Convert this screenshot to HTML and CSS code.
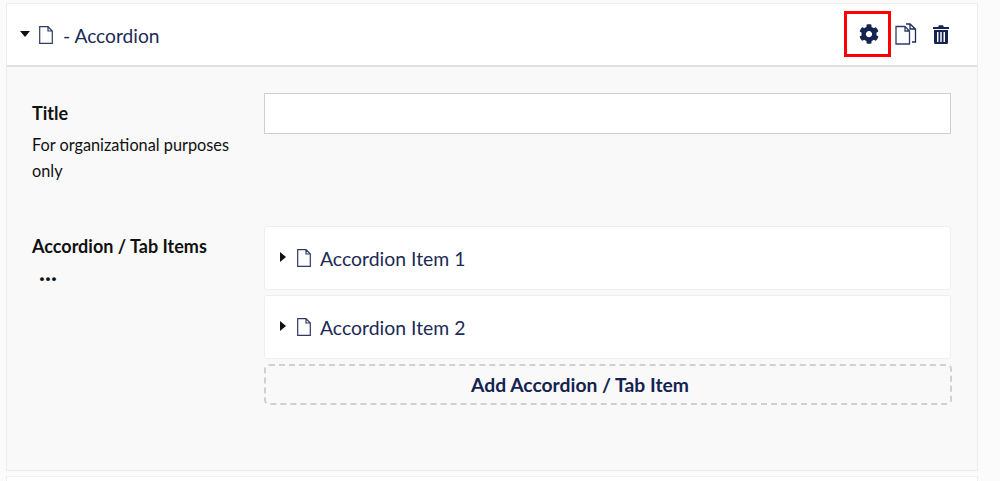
FILE: index.html
```html
<!DOCTYPE html>
<html lang="en">
<head>
    <meta charset="UTF-8">
    <title>Accordion</title>
    <link rel="stylesheet" href="styles.css">
</head>
<body>
    <div class="card">
        <div class="card_head">
            <svg class="caret_down" viewBox="0 0 10 6"><path d="M0 0h10L5 6z"/></svg>
            <svg class="doc doc_big" viewBox="0 0 14 18"><path d="M.7.6h8.300l4.300 4.400v12.400H.7z M9 .6v4.400h4.300"/></svg>
            <span class="card_title">- Accordion</span>
            <div class="tools">
                <span class="tool tool_gear">
                    <svg width="20" height="20" viewBox="0 0 512 512"><path d="M487.400 315.700l-42.600-24.600c4.300-23.200 4.300-47 0-70.200l42.600-24.600c4.900-2.800 7.100-8.600 5.500-14-11.100-35.600-30-67.800-54.700-94.600-3.800-4.100-10-5.100-14.800-2.300L380.800 110c-17.900-15.400-38.500-27.300-60.800-35.100V25.800c0-5.600-3.900-10.500-9.400-11.700-36.700-8.200-74.300-7.800-109.200 0-5.500 1.200-9.400 6.100-9.400 11.700V75c-22.200 7.900-42.800 19.800-60.800 35.100L88.700 85.500c-4.900-2.800-11-1.900-14.800 2.300-24.700 26.700-43.600 58.900-54.700 94.600-1.700 5.400.6 11.200 5.500 14L67.300 221c-4.300 23.200-4.300 47 0 70.200l-42.600 24.600c-4.900 2.800-7.100 8.600-5.500 14 11.100 35.600 30 67.800 54.700 94.600 3.800 4.100 10 5.100 14.800 2.300l42.600-24.600c17.900 15.400 38.500 27.300 60.800 35.100v49.200c0 5.600 3.900 10.500 9.400 11.700 36.700 8.200 74.300 7.800 109.200 0 5.500-1.200 9.400-6.100 9.400-11.700v-49.200c22.200-7.900 42.800-19.800 60.800-35.100l42.600 24.600c4.900 2.800 11 1.900 14.800-2.300 24.700-26.700 43.600-58.900 54.700-94.600 1.500-5.500-.7-11.300-5.600-14.100zM256 336c-44.100 0-80-35.900-80-80s35.900-80 80-80 80 35.900 80 80-35.900 80-80 80z"/></svg>
                </span>
                <span class="tool tool_copy">
                    <svg width="22" height="22" viewBox="0 0 22 22"><path class="line_soft" d="M1 3.500h9l4.500 4.500v13H1z M10 3.500V8h4.500"/><path class="line_hard" d="M11 1h4l5.500 5v13h-3.500 M15 1v5h5.500"/></svg>
                </span>
                <span class="tool tool_trash">
                    <svg width="16" height="20" viewBox="0 0 16 20"><path d="M0 3h5.200L6 1.200h4L10.800 3H16v2H0z M1 6h14v12.500a1.500 1.500 0 0 1-1.500 1.500h-11A1.500 1.500 0 0 1 1 18.500z M4 8v10h1.500V8z M7.250 8v10h1.500V8z M10.500 8v10H12V8z" fill-rule="evenodd"/></svg>
                </span>
            </div>
        </div>
        <div class="card_body">
            <div class="field field_title">
                <div class="field_label">
                    <div class="label_name">Title</div>
                    <div class="label_note">For organizational purposes only</div>
                </div>
                <div class="field_main">
                    <input class="text_input" type="text">
                </div>
            </div>
            <div class="field">
                <div class="field_label">
                    <div class="label_name">Accordion / Tab Items</div>
                    <div class="label_more">...</div>
                </div>
                <div class="field_main">
                    <div class="item">
                        <svg class="caret_right" viewBox="0 0 6 10"><path d="M0 0l6 5-6 5z"/></svg>
                        <svg class="doc doc_big" viewBox="0 0 14 18"><path d="M.7.6h8.300l4.300 4.400v12.400H.7z M9 .6v4.400h4.300"/></svg>
                        <span class="item_name">Accordion Item 1</span>
                    </div>
                    <div class="item">
                        <svg class="caret_right" viewBox="0 0 6 10"><path d="M0 0l6 5-6 5z"/></svg>
                        <svg class="doc doc_big" viewBox="0 0 14 18"><path d="M.7.6h8.300l4.300 4.400v12.400H.7z M9 .6v4.400h4.300"/></svg>
                        <span class="item_name">Accordion Item 2</span>
                    </div>
                    <div class="add_item">Add Accordion / Tab Item</div>
                </div>
            </div>
        </div>
    </div>
    <div class="card card_next"></div>
</body>
</html>
```

FILE: styles.css
```css
*{
    margin: 0px;
    padding: 0px;
    box-sizing: border-box;
}
html,body{
    height: 481px;
    overflow: hidden;
}
body{
    background: #fbfbfc;
    font-family: Lato, "Liberation Sans", sans-serif;
    color: #14213d;
    padding: 3px 22px 0px 6px;
}
.card{
    background: #fff;
    border: 1px solid #ececee;
    border-top: 1px solid #f0f0f2;
}
.card_head{
    height: 63px;
    display: flex;
    align-items: center;
    padding-left: 13px;
    padding-right: 27px;
    background: #fff;
    border-bottom: 2px solid #e1e1e3;
}
.caret_down{
    width: 10px;
    height: 6px;
    fill: #111;
    margin-right: 9px;
    margin-top: -2px;
}
.doc{
    fill: none;
    stroke: #2e3a63;
    stroke-width: 1.2;
}
.doc_big{
    width: 14px;
    height: 18px;
    flex: none;
}
.card_title{
    font-size: 19.2px;
    color: #1c2a55;
    margin-left: 10px;
    margin-top: 2px;
}
.tools{
    margin-left: auto;
    display: flex;
    align-items: center;
    margin-top: -2px;
}
.tool{
    display: flex;
    align-items: center;
    justify-content: center;
}
.tool svg{
    fill: #14234f;
}
.tool_gear{
    width: 47px;
    height: 46px;
    padding-left: 3px;
    border: 3px solid #f00;
}
.tool_copy{
    margin-left: 3px;
    width: 24px;
}
.tool_trash{
    margin-left: 15px;
    margin-right: 1px;
}
.tool_copy svg{
    fill: none;
    stroke-width: 1.300;
}
.line_soft{
    stroke: #2f3b66;
}
.line_hard{
    stroke: #1f2b58;
}
.card_body{
    height: 403px;
    background: #f9f9fa;
    padding: 26px 26px 0px 25px;
}
.field{
    display: flex;
}
.field_title{
    height: 133px;
}
.field_label{
    width: 232px;
    flex: none;
    color: #111;
}
.label_name{
    font-size: 18px;
    font-weight: 700;
    line-height: 40px;
}
.label_note{
    font-size: 16.3px;
    line-height: 26px;
    width: 210px;
    margin-top: -1px;
}
.label_more{
    font-size: 25px;
    font-weight: 700;
    line-height: 14px;
    margin-left: 7px;
    margin-top: -2px;
}
.field_main{
    flex: 1;
}
.text_input{
    display: block;
    width: 100%;
    height: 41px;
    background: #fff;
    border: 1px solid #cfcfd2;
    outline: none;
}
.item{
    height: 64px;
    margin-bottom: 5px;
    display: flex;
    align-items: center;
    padding-left: 15px;
    background: #fff;
    border: 1px solid #efeff1;
    border-radius: 3px;
}
.caret_right{
    width: 6px;
    height: 10px;
    fill: #111;
    margin-right: 11px;
    margin-top: -2px;
}
.item_name{
    font-size: 19.4px;
    color: #1c2a55;
    margin-left: 9px;
}
.add_item{
    height: 41px;
    margin-right: -1px;
    display: flex;
    align-items: center;
    justify-content: center;
    padding-right: 56px;
    font-size: 19.3px;
    font-weight: 700;
    color: #14234f;
    border: 2px dashed #d0d0d3;
    border-radius: 5px;
}
.card_next{
    margin-top: 5px;
    height: 20px;
}
```
